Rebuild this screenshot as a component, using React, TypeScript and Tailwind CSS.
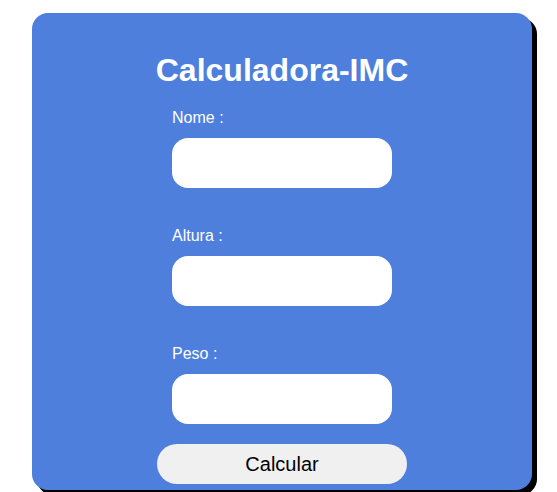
import React, { useState } from 'react';

const fields = [
  { key: 'nome', label: 'Nome :' },
  { key: 'altura', label: 'Altura :' },
  { key: 'peso', label: 'Peso :' },
];

export default function App() {
  const [values, setValues] = useState<Record<string, string>>({});

  return (
    <div className="min-h-screen bg-white font-['Liberation_Sans',Arial,sans-serif]">
      <div className="ml-[32px] pt-[13px]">
        <div className="w-[500px] h-[477px] rounded-[16px] bg-[#4e7fdc] shadow-[5px_5px_0_#000] flex flex-col items-center">
          <h1 className="mt-[39px] text-[32px] leading-[36px] font-bold text-white">Calculadora-IMC</h1>
          <div className="mt-[21px] flex flex-col">
            {fields.map((f, i) => (
              <div key={f.key} className={i > 0 ? 'mt-[39px]' : ''}>
                <label className="block text-[16px] leading-[18px] text-white">{f.label}</label>
                <input
                  type="text"
                  value={values[f.key] ?? ''}
                  onChange={(e) => setValues({ ...values, [f.key]: e.target.value })}
                  className="mt-[11px] block w-[220px] h-[50px] rounded-[16px] bg-white px-3 outline-none"
                />
              </div>
            ))}
          </div>
          <button className="mt-[20px] w-[250px] h-[40px] rounded-full bg-[#f0f0f0] text-[20px] text-black">
            Calcular
          </button>
        </div>
      </div>
    </div>
  );
}
